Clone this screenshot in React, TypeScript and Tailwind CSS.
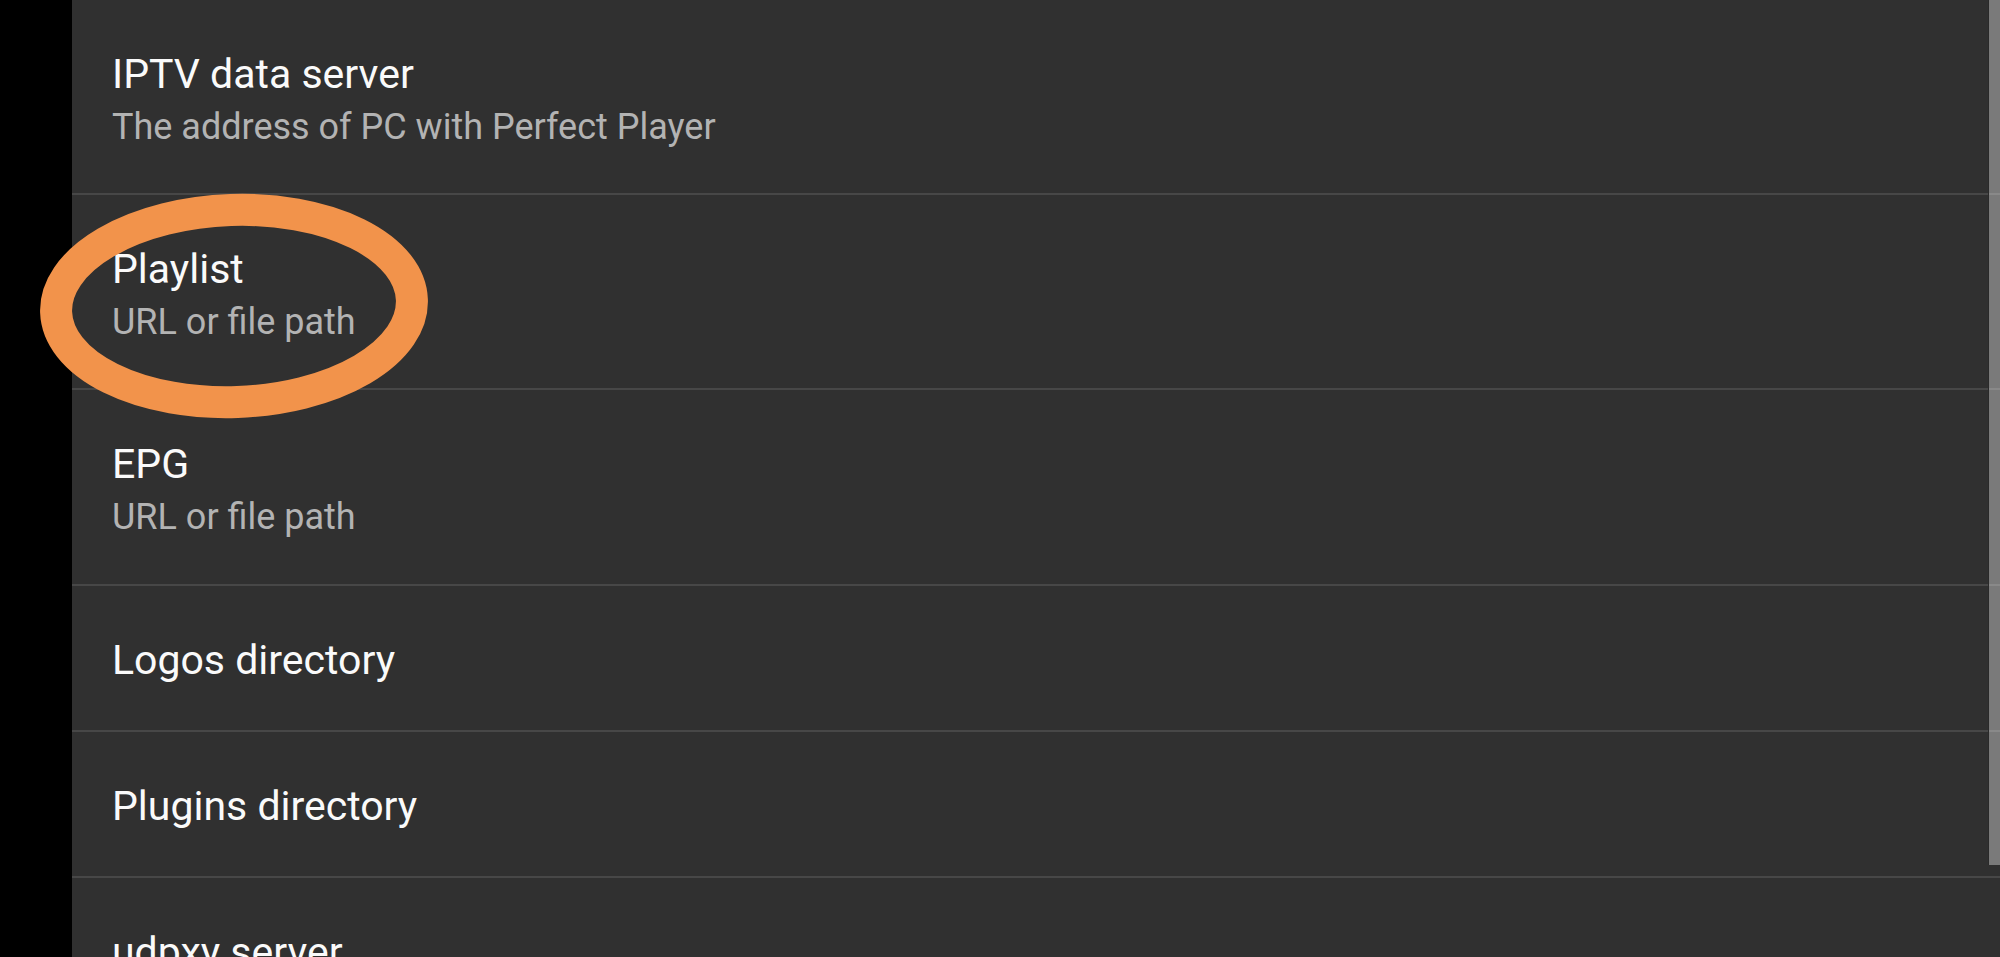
import React from "react";

type Row = { title: string; subtitle?: string };

const rows: Row[] = [
  { title: "IPTV data server", subtitle: "The address of PC with Perfect Player" },
  { title: "Playlist", subtitle: "URL or file path" },
  { title: "EPG", subtitle: "URL or file path" },
  { title: "Logos directory" },
  { title: "Plugins directory" },
  { title: "udpxy server" },
];

export default function App() {
  return (
    <div
      className="relative flex w-[2000px] h-[957px] overflow-hidden bg-black"
      style={{ fontFamily: "Roboto, 'Noto Sans', 'Liberation Sans', sans-serif" }}
    >
      <div className="w-[72px] shrink-0 bg-black" />
      <div className="flex-1 bg-[#303030] flex flex-col">
        <div className="flex flex-col">
          {rows.map((r, i) => (
            <div
              key={i}
              className={`shrink-0 border-b-2 border-[#474747] pl-[40px] pt-[48px] ${
                r.subtitle ? (i === 2 ? "h-[196px]" : "h-[195px]") : "h-[146px]"
              }`}
            >
              <div className="text-[41px] leading-[52px] text-[#fafafa]">{r.title}</div>
              {r.subtitle && (
                <div className="mt-[4px] text-[36px] leading-[46px] text-[#b3b3b3]">{r.subtitle}</div>
              )}
            </div>
          ))}
        </div>
      </div>
      <div className="absolute right-0 top-0 w-[12px] h-[865px] bg-[#ffffff5c] border-l border-[#2a2a2a]" />
      <svg
        className="pointer-events-none absolute left-0 top-0"
        width={2000}
        height={957}
        viewBox="0 0 2000 957"
      >
        <ellipse
          cx={234}
          cy={306}
          rx={178}
          ry={96}
          fill="none"
          stroke="#f2934b"
          strokeWidth={32}
          transform="rotate(-2 234 306)"
        />
      </svg>
    </div>
  );
}
